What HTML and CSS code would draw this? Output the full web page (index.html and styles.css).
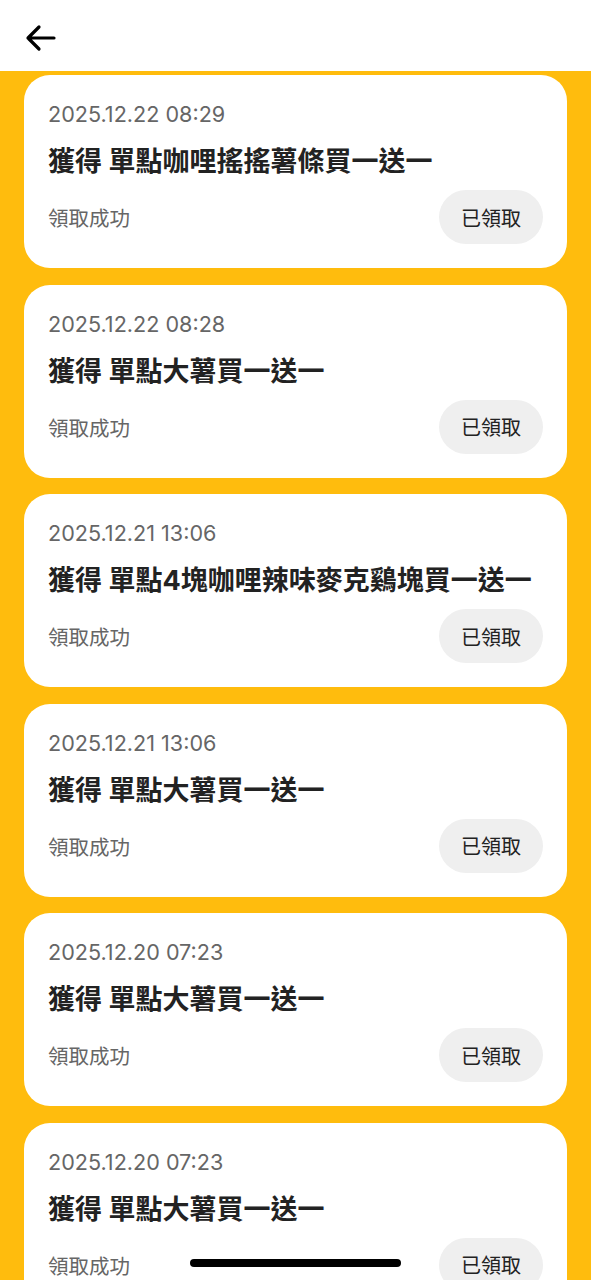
FILE: index.html
```html
<!DOCTYPE html>
<html lang="zh-Hant">
<head>
    <meta charset="UTF-8">
    <meta name="viewport" content="width=device-width, initial-scale=1.0">
    <title>領取紀錄</title>
    <link rel="stylesheet" href="styles.css">
</head>
<body>
    <!-- 頂部導覽 -->
    <div class="header">
        <button class="back-btn" aria-label="返回">
            <svg width="34" height="28" viewBox="0 0 34 28">
                <path d="M30 14H4M15 3L4 14l11 11" fill="none" stroke="#000" stroke-width="3.2" stroke-linecap="round" stroke-linejoin="round"/>
            </svg>
        </button>
    </div>

    <!-- 紀錄列表 -->
    <div class="list">
        <div class="card">
            <div class="date">2025.12.22 08:29</div>
            <div class="title">獲得 單點咖哩搖搖薯條買一送一</div>
            <div class="row">
                <span class="status">領取成功</span>
                <span class="claimed">已領取</span>
            </div>
        </div>
        <div class="card">
            <div class="date">2025.12.22 08:28</div>
            <div class="title">獲得 單點大薯買一送一</div>
            <div class="row">
                <span class="status">領取成功</span>
                <span class="claimed">已領取</span>
            </div>
        </div>
        <div class="card">
            <div class="date">2025.12.21 13:06</div>
            <div class="title">獲得 單點4塊咖哩辣味麥克鷄塊買一送一</div>
            <div class="row">
                <span class="status">領取成功</span>
                <span class="claimed">已領取</span>
            </div>
        </div>
        <div class="card">
            <div class="date">2025.12.21 13:06</div>
            <div class="title">獲得 單點大薯買一送一</div>
            <div class="row">
                <span class="status">領取成功</span>
                <span class="claimed">已領取</span>
            </div>
        </div>
        <div class="card">
            <div class="date">2025.12.20 07:23</div>
            <div class="title">獲得 單點大薯買一送一</div>
            <div class="row">
                <span class="status">領取成功</span>
                <span class="claimed">已領取</span>
            </div>
        </div>
        <div class="card">
            <div class="date">2025.12.20 07:23</div>
            <div class="title">獲得 單點大薯買一送一</div>
            <div class="row">
                <span class="status">領取成功</span>
                <span class="claimed">已領取</span>
            </div>
        </div>
    </div>

    <div class="home-indicator"></div>
</body>
</html>
```

FILE: styles.css
```css
body {
    font-family: Inter, "Noto Sans CJK TC", sans-serif;
    margin: 0;
    padding: 0;
    background: #ffbc0d;
    height: 1280px;
    overflow: hidden;
}

.header {
    background: white;
    height: 71px;
    display: flex;
    align-items: center;
    padding-left: 24px;
}

.back-btn {
    background: none;
    border: none;
    padding: 0;
    margin-top: 5px;
    display: flex;
    cursor: pointer;
}

.list {
    padding: 4px 24px 0;
    display: flex;
    flex-direction: column;
    gap: 16.6px;
}

.card {
    background: white;
    border-radius: 26px;
    padding: 24px 24px 24px 24px;
    height: 145px;
    flex-shrink: 0;
}

.date {
    font-size: 21.6px;
    line-height: 30px;
    color: #666;
}

.title {
    margin-top: 16px;
    font-size: 27px;
    line-height: 34px;
    font-weight: bold;
    color: #222;
}

.row {
    margin-top: 11px;
    display: flex;
    justify-content: space-between;
    align-items: center;
}

.status {
    font-size: 20.5px;
    color: #666;
}

.claimed {
    background: #efefef;
    color: #222;
    font-size: 20px;
    height: 54px;
    width: 104px;
    border-radius: 27px;
    display: flex;
    justify-content: center;
    align-items: center;
}

.home-indicator {
    position: fixed;
    left: 190px;
    bottom: 13px;
    width: 211px;
    height: 8px;
    border-radius: 4px;
    background: #000;
}
```
